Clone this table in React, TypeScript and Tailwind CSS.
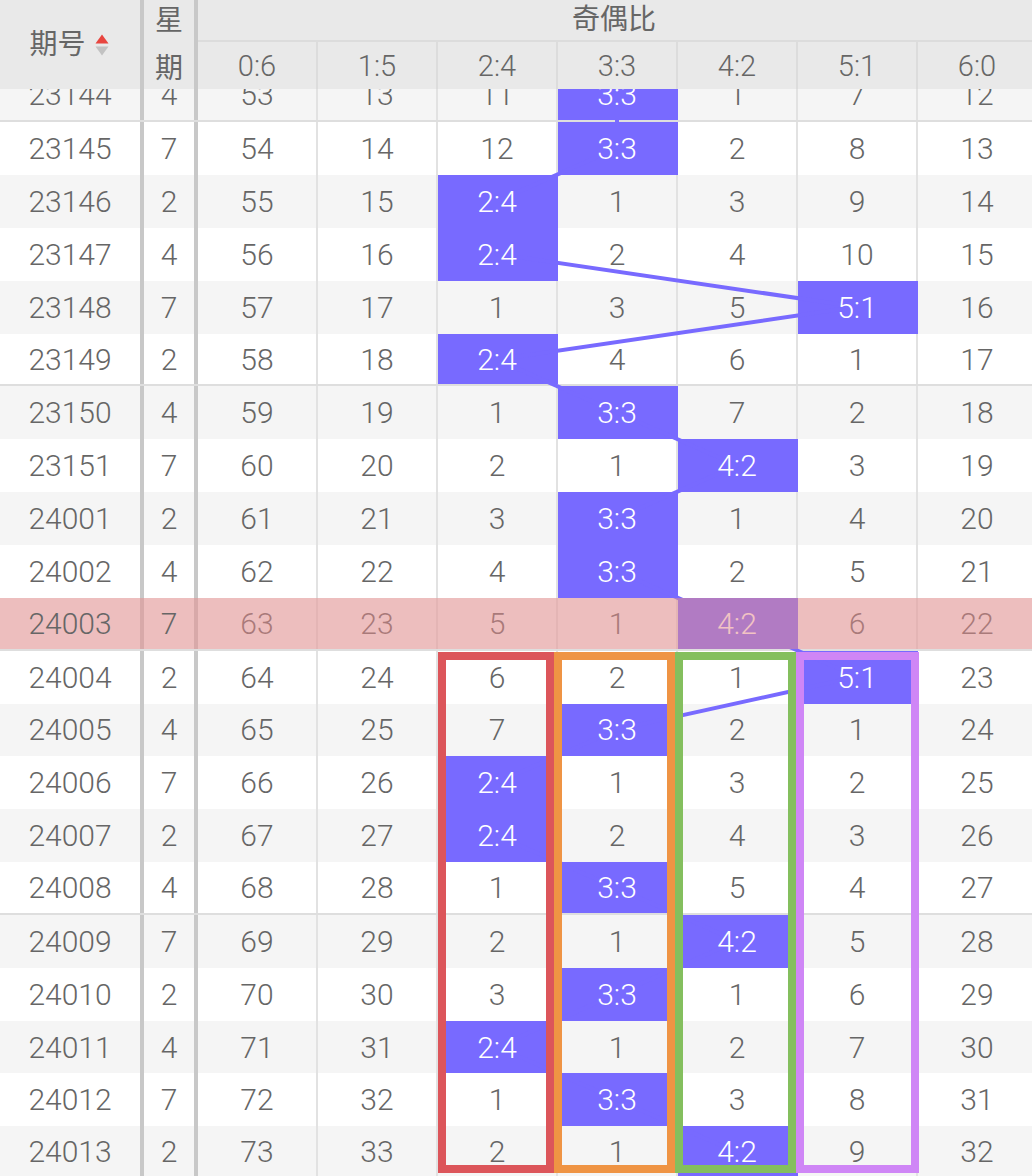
import React from 'react';

const ROW_H = 52.85;
const LABELS = ['0:6', '1:5', '2:4', '3:3', '4:2', '5:1', '6:0'];

type Row = { qh: string; wk: number; hit: number; nums: number[] };

// nums[hit] is ignored, the label is shown instead
const rows: Row[] = [
  { qh: '23144', wk: 4, hit: 3, nums: [53, 13, 11, 0, 1, 7, 12] },
  { qh: '23145', wk: 7, hit: 3, nums: [54, 14, 12, 0, 2, 8, 13] },
  { qh: '23146', wk: 2, hit: 2, nums: [55, 15, 0, 1, 3, 9, 14] },
  { qh: '23147', wk: 4, hit: 2, nums: [56, 16, 0, 2, 4, 10, 15] },
  { qh: '23148', wk: 7, hit: 5, nums: [57, 17, 1, 3, 5, 0, 16] },
  { qh: '23149', wk: 2, hit: 2, nums: [58, 18, 0, 4, 6, 1, 17] },
  { qh: '23150', wk: 4, hit: 3, nums: [59, 19, 1, 0, 7, 2, 18] },
  { qh: '23151', wk: 7, hit: 4, nums: [60, 20, 2, 1, 0, 3, 19] },
  { qh: '24001', wk: 2, hit: 3, nums: [61, 21, 3, 0, 1, 4, 20] },
  { qh: '24002', wk: 4, hit: 3, nums: [62, 22, 4, 0, 2, 5, 21] },
  { qh: '24003', wk: 7, hit: 4, nums: [63, 23, 5, 1, 0, 6, 22] },
  { qh: '24004', wk: 2, hit: 5, nums: [64, 24, 6, 2, 1, 0, 23] },
  { qh: '24005', wk: 4, hit: 3, nums: [65, 25, 7, 0, 2, 1, 24] },
  { qh: '24006', wk: 7, hit: 2, nums: [66, 26, 0, 1, 3, 2, 25] },
  { qh: '24007', wk: 2, hit: 2, nums: [67, 27, 0, 2, 4, 3, 26] },
  { qh: '24008', wk: 4, hit: 3, nums: [68, 28, 1, 0, 5, 4, 27] },
  { qh: '24009', wk: 7, hit: 4, nums: [69, 29, 2, 1, 0, 5, 28] },
  { qh: '24010', wk: 2, hit: 3, nums: [70, 30, 3, 0, 1, 6, 29] },
  { qh: '24011', wk: 4, hit: 2, nums: [71, 31, 0, 1, 2, 7, 30] },
  { qh: '24012', wk: 7, hit: 3, nums: [72, 32, 1, 0, 3, 8, 31] },
  { qh: '24013', wk: 2, hit: 4, nums: [73, 33, 2, 1, 0, 9, 32] },
];

const HIGHLIGHT = 10;

const SortIcon = () => (
  <svg width="14" height="24" viewBox="0 0 14 24">
    <polygon points="7,1.5 13.5,10.5 0.5,10.5" fill="#e8453f" />
    <polygon points="0.5,13.5 13.5,13.5 7,22.5" fill="#c2c2c2" />
  </svg>
);

const Header = () => (
  <div className="relative z-30 flex h-[89px] bg-[#e9e9e9] text-[#666]">
    <div className="w-[144px] shrink-0 border-r-4 border-[#c8c8c8] flex items-center justify-center gap-[9px] pr-[2px]">
      <span className="text-[28px] font-normal">期号</span>
      <SortIcon />
    </div>
    <div className="w-[54px] shrink-0 border-r-4 border-[#c8c8c8] flex flex-col items-center justify-center text-[28px] font-normal leading-[48px]">
      <span>星</span>
      <span>期</span>
    </div>
    <div className="flex flex-col">
      <div className="h-[42px] w-[840px] border-b-2 border-[#dcdcdc] flex items-center justify-center pr-[8px] text-[28px] font-normal">
        奇偶比
      </div>
      <div className="flex h-[47px]">
        {LABELS.map((l) => (
          <div key={l} className="w-[120px] shrink-0 border-r-2 border-[#dcdcdc] flex items-center justify-center text-[29px] pt-[3px]">
            {l}
          </div>
        ))}
      </div>
    </div>
  </div>
);

const TableRow = ({ row, idx }: { row: Row; idx: number }) => {
  const hl = idx === HIGHLIGHT;
  return (
    <div
      className={`flex h-[52.85px] ${idx % 2 === 0 ? 'bg-[#f5f5f5]' : 'bg-white'} ${idx % 5 === 0 ? 'border-b-2 border-[#dedede]' : ''}`}
    >
      <div className="w-[144px] shrink-0 border-r-4 border-[#c8c8c8] flex items-center justify-center text-[30px] text-[#666]">
        <span className={hl ? 'relative z-[13]' : 'relative z-10'}>{row.qh}</span>
      </div>
      <div className="w-[54px] shrink-0 border-r-4 border-[#c8c8c8] flex items-center justify-center text-[30px] text-[#666]">
        <span className={hl ? 'relative z-[13]' : 'relative z-10'}>{row.wk}</span>
      </div>
      {row.nums.map((n, c) => {
        const hit = c === row.hit;
        return (
          <div
            key={c}
            className={`w-[120px] shrink-0 border-r-2 flex items-center justify-center text-[30px] ${
              hit ? 'bg-[#786aff] border-[#786aff] text-white' : 'border-[#e2e2e2] text-[#666]'
            }`}
          >
            <span className="relative z-10">{hit ? LABELS[c] : n}</span>
          </div>
        );
      })}
    </div>
  );
};

export default function App() {
  const points = rows
    .map((r, i) => `${198 + 120 * r.hit + 59},${i * ROW_H + ROW_H / 2}`)
    .join(' ');

  return (
    <div className="w-[1032px] h-[1176px] overflow-hidden bg-white font-light font-[Roboto,'Noto_Sans_CJK_SC',sans-serif]">
      <Header />
      <div className="relative -mt-[19.6px]">
        {rows.map((r, i) => (
          <TableRow key={r.qh} row={r} idx={i} />
        ))}

        {/* trend line between hits */}
        <svg
          className="absolute left-0 top-0 z-[5] pointer-events-none"
          width={1032}
          height={rows.length * ROW_H}
        >
          <polyline points={points} fill="none" stroke="#786aff" strokeWidth={4} />
        </svg>

        {/* current period highlight */}
        <div className="absolute left-0 right-0 top-[528.5px] h-[50.85px] z-[12] bg-[rgba(230,140,140,0.52)] pointer-events-none" />

        {/* prediction boxes */}
        <div className="absolute top-[582.6px] left-[438px] w-[116px] h-[521px] z-20 border-[8px] border-[#dc555a]" />
        <div className="absolute top-[582.6px] left-[554px] w-[121px] h-[521px] z-20 border-[8px] border-[#ef9444]" />
        <div className="absolute top-[582.6px] left-[675px] w-[121px] h-[521px] z-20 border-[8px] border-[#84bf5e]" />
        <div className="absolute top-[582.6px] left-[796px] w-[123px] h-[521px] z-20 border-[8px] border-[#cf86f6]" />
      </div>
    </div>
  );
}
